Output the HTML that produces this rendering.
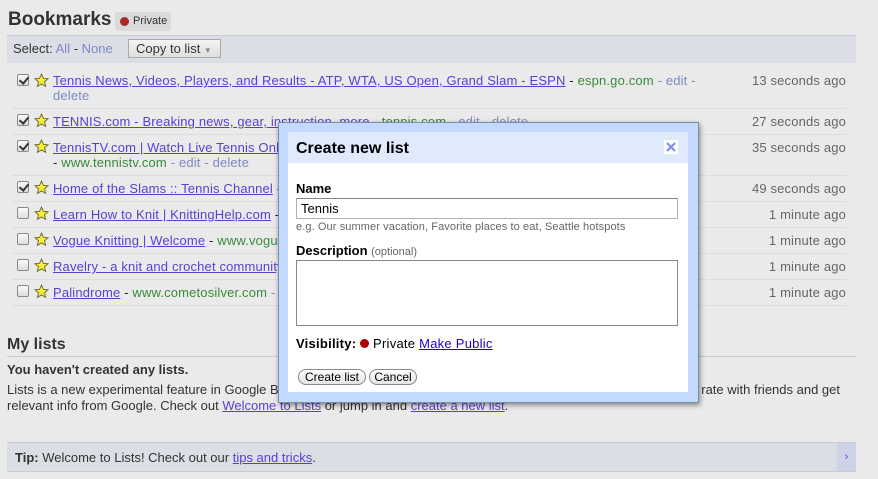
<!DOCTYPE html>
<html><head><meta charset="utf-8"><style>
*{margin:0;padding:0;box-sizing:border-box}
body{width:878px;height:479px;background:#eaeaea;font-family:"Liberation Sans",Arial,sans-serif;font-size:13px;color:#222;position:relative;overflow:hidden}
.a{position:absolute;white-space:nowrap}
.r{letter-spacing:0.16px}
a,.l{color:#5a3fcf;text-decoration:underline}
.g{color:#3a8a3a}.e{color:#7f89c4}
.cb{position:absolute;left:17px;width:12px;height:12px;border:1px solid #8a8a8a;border-radius:2px;background:linear-gradient(#fafafa,#ddd)}
.cb.c::after{content:"";position:absolute;left:3px;top:0px;width:4px;height:7px;border:solid #333;border-width:0 2px 2px 0;transform:rotate(40deg)}
.st{position:absolute;left:34px;width:15px;height:15px}
.t{position:absolute;right:32px;color:#666}
.sep{position:absolute;left:12px;width:834px;height:1px;background:#dcdde3}
</style></head><body>
<div class="a" style="left:8px;top:9px;font-size:19px;font-weight:bold;color:#333">Bookmarks</div>
<div class="a" style="left:115px;top:12px;height:19px;width:56px;background:#dadada;border-radius:3px;font-size:11px;line-height:19px;padding-left:18px;color:#333">Private<span style="position:absolute;left:5px;top:5px;width:9px;height:9px;border-radius:50%;background:#a52a2a"></span></div>
<div class="a" style="left:7px;top:35px;width:849px;height:28px;background:#dcdee6;border-top:1px solid #c9ccd8"></div>
<div class="a" style="left:13px;top:41px;color:#333">Select: <span class="e">All</span> - <span class="e">None</span></div>
<div class="a" style="left:128px;top:39px;width:93px;height:19px;border:1px solid #aaa;background:linear-gradient(#f4f4f4,#dedede);line-height:17px;padding-left:7px;color:#333">Copy to list <span style="font-size:8px;color:#888">▼</span></div>

<svg width="0" height="0" style="position:absolute"><defs><symbol id="s" viewBox="0 0 14 14"><path d="M7 1l1.8 4 4.2.4-3.2 2.8 1 4.2L7 10.2 3.2 12.4l1-4.2L1 5.4l4.2-.4z" fill="#f8ef3a" stroke="#6a6a30" stroke-width="0.9"/></symbol></defs></svg>

<div class="cb c" style="top:74px"></div><svg class="st" style="top:73px"><use href="#s"/></svg>
<div class="a r" style="left:53px;top:73px"><span class="l">Tennis News, Videos, Players, and Results - ATP, WTA, US Open, Grand Slam - ESPN</span> - <span class="g">espn.go.com</span> <span class="e">- edit -</span></div>
<div class="a e r" style="left:53px;top:88px">delete</div>
<div class="a t r" style="top:73px">13 seconds ago</div>
<div class="sep" style="top:108px"></div>
<div class="cb c" style="top:114px"></div><svg class="st" style="top:113px"><use href="#s"/></svg>
<div class="a r" style="left:53px;top:114px"><span class="l">TENNIS.com - Breaking news, gear, instruction, more</span> - <span class="g">tennis.com</span> <span class="e">- edit - delete</span></div>
<div class="a t r" style="top:114px">27 seconds ago</div>
<div class="sep" style="top:134px"></div>
<div class="cb c" style="top:140px"></div><svg class="st" style="top:139px"><use href="#s"/></svg>
<div class="a r" style="left:53px;top:140px"><span class="l">TennisTV.com | Watch Live Tennis Online</span></div>
<div class="a r" style="left:53px;top:155px">- <span class="g">www.tennistv.com</span> <span class="e">- edit - delete</span></div>
<div class="a t r" style="top:140px">35 seconds ago</div>
<div class="sep" style="top:175px"></div>
<div class="cb c" style="top:181px"></div><svg class="st" style="top:180px"><use href="#s"/></svg>
<div class="a r" style="left:53px;top:181px"><span class="l">Home of the Slams :: Tennis Channel</span> - </div>
<div class="a t r" style="top:181px">49 seconds ago</div>
<div class="sep" style="top:201px"></div>
<div class="cb" style="top:207px"></div><svg class="st" style="top:206px"><use href="#s"/></svg>
<div class="a r" style="left:53px;top:207px"><span class="l">Learn How to Knit | KnittingHelp.com</span> - </div>
<div class="a t r" style="top:207px">1 minute ago</div>
<div class="sep" style="top:227px"></div>
<div class="cb" style="top:233px"></div><svg class="st" style="top:232px"><use href="#s"/></svg>
<div class="a r" style="left:53px;top:233px"><span class="l">Vogue Knitting | Welcome</span> - <span class="g">www.vogue</span></div>
<div class="a t r" style="top:233px">1 minute ago</div>
<div class="sep" style="top:253px"></div>
<div class="cb" style="top:259px"></div><svg class="st" style="top:258px"><use href="#s"/></svg>
<div class="a r" style="left:53px;top:259px"><span class="l">Ravelry - a knit and crochet community</span></div>
<div class="a t r" style="top:259px">1 minute ago</div>
<div class="sep" style="top:279px"></div>
<div class="cb" style="top:285px"></div><svg class="st" style="top:284px"><use href="#s"/></svg>
<div class="a r" style="left:53px;top:285px"><span class="l">Palindrome</span> - <span class="g">www.cometosilver.com</span> <span class="e">-</span></div>
<div class="a t r" style="top:285px">1 minute ago</div>
<div class="sep" style="top:305px"></div>

<div class="a" style="left:7px;top:336px;font-size:16px;font-weight:bold;color:#333">My lists</div>
<div class="a" style="left:7px;top:356px;width:849px;height:1px;background:#c9ccd8"></div>
<div class="a" style="left:7px;top:362px;font-weight:bold;color:#333">You haven't created any lists.</div>
<div class="a" style="left:7px;top:382px;color:#333">Lists is a new experimental feature in Google B</div>
<div class="a" style="right:38px;top:382px;color:#333">rate with friends and get</div>
<div class="a" style="left:7px;top:398px;color:#333">relevant info from Google. Check out <span class="l">Welcome to Lists</span> or jump in and <span class="l">create a new list</span>.</div>
<div class="a" style="left:7px;top:442px;width:849px;height:30px;background:#dcdee6;border-top:1px solid #c9ccd8;border-bottom:1px solid #c9ccd8"></div>
<div class="a" style="left:837px;top:443px;width:19px;height:28px;background:#cdd3e6;color:#5a3fcf;font-size:11px;text-align:center;line-height:28px">›</div>
<div class="a" style="left:15px;top:450px;color:#333"><b>Tip:</b> Welcome to Lists! Check out our <span class="l">tips and tricks</span>.</div>

<div class="a" style="left:278px;top:122px;width:421px;height:281px;background:#c3d9ff;border:1px solid #7a8fa8;box-shadow:1px 2px 5px rgba(0,0,0,.45)"></div>
<div class="a" style="left:288px;top:132px;width:400px;height:260px;background:#fff"></div>
<div class="a" style="left:288px;top:132px;width:400px;height:31px;background:#dfeafc"></div>
<div class="a" style="left:296px;top:140px;font-size:16px;font-weight:bold;color:#000">Create new list</div>
<div class="a" style="left:664px;top:140px;width:14px;height:14px;background:#fff"><svg width="14" height="14"><path d="M3 3l8 8M11 3l-8 8" stroke="#7f8ff0" stroke-width="2.2"/></svg></div>
<div class="a" style="left:296px;top:181px;font-weight:bold;color:#000">Name</div>
<div class="a" style="left:296px;top:198px;width:382px;height:21px;border:1px solid #b0b0b0;border-top-color:#888;font-size:13px;line-height:19px;padding-left:4px;color:#000">Tennis</div>
<div class="a" style="left:296px;top:221px;font-size:11px;color:#666;letter-spacing:0.1px">e.g. Our summer vacation, Favorite places to eat, Seattle hotspots</div>
<div class="a" style="left:296px;top:243px;color:#000"><b>Description</b> <span style="font-size:11px;color:#666">(optional)</span></div>
<div class="a" style="left:296px;top:260px;width:382px;height:66px;border:1px solid #888"></div>
<div class="a" style="left:296px;top:336px;color:#000;letter-spacing:0.25px"><b>Visibility:</b> <span style="display:inline-block;width:9px;height:9px;border-radius:50%;background:#a00;vertical-align:0"></span> Private <a style="color:#2200cc">Make Public</a></div>
<div class="a" style="left:298px;top:369px;width:68px;height:16px;border:1px solid #888;border-radius:8px;background:linear-gradient(#fff,#e4e4e4);font-size:12px;text-align:center;line-height:14px;color:#000">Create list</div>
<div class="a" style="left:369px;top:369px;width:48px;height:16px;border:1px solid #888;border-radius:8px;background:linear-gradient(#fff,#e4e4e4);font-size:12px;text-align:center;line-height:14px;color:#000">Cancel</div>
</body></html>
